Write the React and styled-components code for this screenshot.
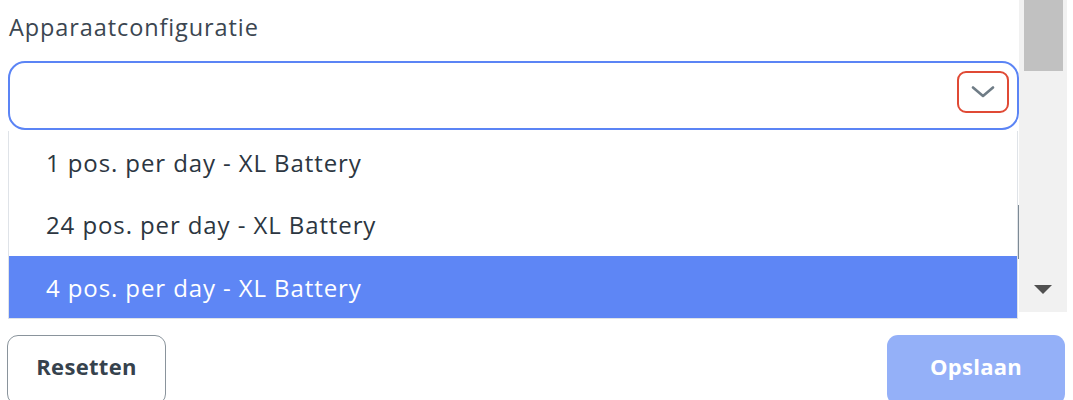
import React from "react";
import styled, { createGlobalStyle } from "styled-components";

const Global = createGlobalStyle`
  html, body { margin: 0; padding: 0; background: #ffffff; }
  body { font-family: "Open Sans", "Noto Sans", sans-serif; overflow: hidden; }
  * { box-sizing: border-box; }
`;

const Page = styled.div`
  width: 1073px;
  height: 400px;
  display: flex;
  flex-direction: column;
  position: relative;
  overflow: hidden;
`;

const ScrollArea = styled.div`
  display: flex;
  flex-shrink: 0;
  height: 312px;
  width: 1067px;
`;

const Content = styled.div`
  flex: 1;
  padding: 12px 0 0 8px;
  position: relative;
`;

const Label = styled.div`
  font-size: 23.5px;
  letter-spacing: 0.9px;
  color: #3b4651;
  line-height: 30px;
  padding-left: 1px;
`;

const SelectBox = styled.div`
  margin-top: 19px;
  width: 1011px;
  height: 69px;
  border: 2.5px solid #5b84f5;
  border-radius: 17px;
  display: flex;
  align-items: flex-start;
  justify-content: flex-end;
  padding: 8px 8px 0 0;
  background: #fff;
`;

const ChevronButton = styled.div`
  width: 52px;
  height: 42px;
  border: 2.5px solid #e04a35;
  border-radius: 9px;
  display: flex;
  align-items: center;
  justify-content: center;
`;

const Track = styled.div`
  width: 48px;
  background: #f1f1f1;
  display: flex;
  flex-direction: column;
  align-items: center;
  justify-content: space-between;
  padding-bottom: 18px;
`;

const Thumb = styled.div`
  width: 39px;
  height: 71px;
  background: #c1c1c1;
`;

const DownArrow = styled.div`
  width: 0;
  height: 0;
  border-left: 9px solid transparent;
  border-right: 9px solid transparent;
  border-top: 9px solid #505050;
`;

const EdgeLine = styled.div`
  position: absolute;
  left: 1017px;
  top: 205px;
  width: 2px;
  height: 54px;
  background: #7d8a95;
`;

const Popup = styled.div`
  position: absolute;
  left: 8px;
  top: 131px;
  width: 1010px;
  background: #fff;
  border: 1px solid #dfe3e8;
  border-top: none;
  z-index: 2;
`;

const Option = styled.div`
  height: ${(p) => (p.$last ? "62px" : "62.5px")};
  display: flex;
  align-items: center;
  padding-left: 37px;
  font-size: 24px;
  letter-spacing: 0.9px;
  color: ${(p) => (p.$selected ? "#ffffff" : "#2c3641")};
  background: ${(p) => (p.$selected ? "#5e86f5" : "#ffffff")};
`;

const Footer = styled.div`
  display: flex;
  flex-shrink: 0;
  justify-content: space-between;
  padding: 23px 7px 0 7px;
`;

const Button = styled.button`
  height: 70px;
  border-radius: 11px;
  font-family: "Open Sans", "Noto Sans", sans-serif;
  font-weight: 700;
  font-size: 22px;
  letter-spacing: 0.3px;
  padding: 0 0 8px 0;
  width: ${(p) => p.$w}px;
  border: ${(p) => (p.$primary ? "none" : "1.5px solid #8a949c")};
  background: ${(p) => (p.$primary ? "#94b0f8" : "#ffffff")};
  color: ${(p) => (p.$primary ? "#ffffff" : "#36424d")};
  display: flex;
  justify-content: center;
  align-items: center;
  margin-right: ${(p) => (p.$primary ? "1px" : "0")};
`;

const Chevron = () => (
  <svg width="24" height="12" viewBox="0 0 24 12" fill="none">
    <path d="M2 1.5 L12 10 L22 1.5" stroke="#6f7c86" strokeWidth="2.6" strokeLinecap="round" strokeLinejoin="round" />
  </svg>
);

const options = [
  "1 pos. per day - XL Battery",
  "24 pos. per day - XL Battery",
  "4 pos. per day - XL Battery",
];

export default function App() {
  return (
    <>
      <Global />
      <Page>
        <ScrollArea>
          <Content>
            <Label>Apparaatconfiguratie</Label>
            <SelectBox>
              <ChevronButton>
                <Chevron />
              </ChevronButton>
            </SelectBox>
          </Content>
          <Track>
            <Thumb />
            <DownArrow />
          </Track>
        </ScrollArea>
        <EdgeLine />
        <Popup>
          {options.map((o, i) => (
            <Option key={o} $selected={i === 2} $last={i === 2}>
              {o}
            </Option>
          ))}
        </Popup>
        <Footer>
          <Button $w={159}>Resetten</Button>
          <Button $primary $w={178}>Opslaan</Button>
        </Footer>
      </Page>
    </>
  );
}
